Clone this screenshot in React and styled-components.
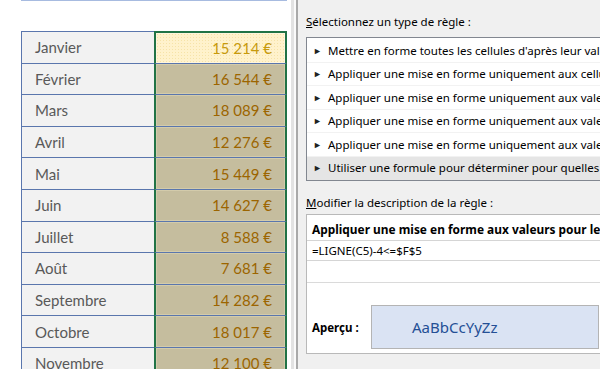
import React from "react";
import styled, { createGlobalStyle } from "styled-components";

const GlobalStyle = createGlobalStyle`
  html, body {
    margin: 0;
    padding: 0;
    width: 600px;
    height: 369px;
    overflow: hidden;
    background: #ffffff;
  }
`;

const months = [
  ["Janvier", "15 214 €"],
  ["Février", "16 544 €"],
  ["Mars", "18 089 €"],
  ["Avril", "12 276 €"],
  ["Mai", "15 449 €"],
  ["Juin", "14 627 €"],
  ["Juillet", "8 588 €"],
  ["Août", "7 681 €"],
  ["Septembre", "14 282 €"],
  ["Octobre", "18 017 €"],
  ["Novembre", "12 100 €"],
];

const rules = [
  "Mettre en forme toutes les cellules d'après leur valeur",
  "Appliquer une mise en forme uniquement aux cellules qui contiennent",
  "Appliquer une mise en forme uniquement aux valeurs rangées parmi les premières ou les dernières valeurs",
  "Appliquer une mise en forme uniquement aux valeurs au-dessus ou en dessous de la moyenne",
  "Appliquer une mise en forme uniquement aux valeurs uniques ou aux doublons",
  "Utiliser une formule pour déterminer pour quelles cellules le format sera appliqué",
];

export default function App() {
  return (
    <>
      <GlobalStyle />
      <Screen>
        <Sheet>
          <TopRule />
          <Table>
            {months.map(([month, amount], i) => (
              <Row key={month}>
                <LabelCell>{month}</LabelCell>
                <ValueCell $first={i === 0}>{amount}</ValueCell>
              </Row>
            ))}
          </Table>
        </Sheet>

        <Dialog>
          <Content>
            <Caption $top={1} $bottom={7}>
              <u>S</u>électionnez un type de règle :
            </Caption>
            <ListBox>
              {rules.map((rule, i) => (
                <RuleItem key={i} $selected={i === rules.length - 1}>
                  <Arrow>►</Arrow>
                  <span>{rule}</span>
                </RuleItem>
              ))}
            </ListBox>

            <Caption $top={14} $bottom={3}>
              <u>M</u>odifier la description de la règle :
            </Caption>
            <DescriptionBox>
              <DescTitle>
                Appliquer une mise en forme aux valeurs pour lesquelles cette formule est vraie :
              </DescTitle>
              <FormulaInput>=LIGNE(C5)-4&lt;=$F$5</FormulaInput>
              <Separator />
              <PreviewRow>
                <PreviewLabel>Aperçu :</PreviewLabel>
                <PreviewSample>AaBbCcYyZz</PreviewSample>
              </PreviewRow>
            </DescriptionBox>
          </Content>
        </Dialog>
      </Screen>
    </>
  );
}

const Screen = styled.div`
  display: flex;
  width: 600px;
  height: 369px;
  overflow: hidden;
`;

const Sheet = styled.div`
  width: 291px;
  flex-shrink: 0;
  background: #ffffff;
`;

const TopRule = styled.div`
  height: 1px;
  width: 266px;
  margin-left: 21px;
  background: #a7bbe0;
`;

const Table = styled.div`
  margin: 30px 0 0 21px;
  width: 266px;
  border-left: 1px solid #5a76ad;
  box-sizing: border-box;
`;

const Row = styled.div`
  display: grid;
  grid-template-columns: 132px 133px;
  height: 31.6px;
`;

const LabelCell = styled.div`
  display: flex;
  align-items: center;
  padding-left: 13px;
  background: #f2f2f2;
  border-top: 1px solid #5a76ad;
  font-family: Lato, "Liberation Sans", sans-serif;
  font-size: 15px;
  color: #595959;
`;

const ValueCell = styled.div`
  display: flex;
  align-items: center;
  justify-content: flex-end;
  padding-right: 13px;
  border-left: 2px solid #217346;
  border-right: 2px solid #217346;
  border-top: ${(p) => (p.$first ? "2px solid #217346" : "1px solid #5a76ad")};
  background-color: ${(p) => (p.$first ? "#fff2cc" : "#c5bd9e")};
  background-image: ${(p) =>
    p.$first
      ? "radial-gradient(circle, #f6e3a8 0.7px, transparent 0.9px)"
      : "none"};
  background-size: 3px 3px;
  box-shadow: inset 0 0 0 1px ${(p) => (p.$first ? "#fff6dc" : "#d3cbab")};
  font-family: Lato, "Liberation Sans", sans-serif;
  font-size: 15px;
  color: ${(p) => (p.$first ? "#c79a0c" : "#9c6500")};
`;

const Dialog = styled.div`
  flex: 1;
  min-width: 0;
  background: #f0f0f0;
  border-left: 3px solid #e2e2e2;
  box-shadow: inset 2px 0 0 #fafafa, inset 4px 0 0 #a9a9a9;
  overflow: hidden;
`;

const Content = styled.div`
  width: 440px;
  padding: 13px 0 0 12px;
  font-family: "Noto Sans", "Open Sans", sans-serif;
  font-size: 11.5px;
  color: #000;
`;

const Caption = styled.div`
  height: 16px;
  line-height: 16px;
  margin-top: ${(p) => p.$top}px;
  margin-bottom: ${(p) => p.$bottom}px;
  white-space: nowrap;
`;

const ListBox = styled.div`
  background: #ffffff;
  border: 1px solid #828790;
  padding: 1px 0 0;
`;

const RuleItem = styled.div`
  display: flex;
  align-items: center;
  height: 23.5px;
  box-sizing: border-box;
  padding-left: 6px;
  white-space: nowrap;
  background: ${(p) => (p.$selected ? "#e5e5e5" : "#ffffff")};
  border-bottom: 1px solid ${(p) => (p.$selected ? "#e5e5e5" : "#f2f2f2")};
`;

const Arrow = styled.span`
  flex-shrink: 0;
  width: 15px;
  font-size: 9px;
  color: #222;
`;

const DescriptionBox = styled.div`
  background: #ffffff;
  border: 1px solid #b9b9b9;
  height: 140px;
  box-sizing: border-box;
`;

const DescTitle = styled.div`
  height: 25px;
  line-height: 28px;
  padding-left: 5px;
  font-size: 11.9px;
  font-weight: 700;
  white-space: nowrap;
`;

const FormulaInput = styled.div`
  height: 21px;
  line-height: 20px;
  padding-left: 5px;
  border-top: 1px solid #d5d5d5;
  border-bottom: 1px solid #d5d5d5;
  box-sizing: border-box;
  white-space: nowrap;
`;

const Separator = styled.div`
  margin-top: 21px;
  height: 1px;
  background: #dadada;
`;

const PreviewRow = styled.div`
  display: flex;
  align-items: center;
  margin-top: 22px;
`;

const PreviewLabel = styled.div`
  width: 59px;
  padding-left: 5px;
  font-weight: 700;
`;

const PreviewSample = styled.div`
  width: 228px;
  height: 44px;
  box-sizing: border-box;
  display: flex;
  align-items: center;
  padding-left: 40px;
  background: #dae3f3;
  border: 1px solid #b4b4b4;
  font-size: 15px;
  color: #244f95;
`;
